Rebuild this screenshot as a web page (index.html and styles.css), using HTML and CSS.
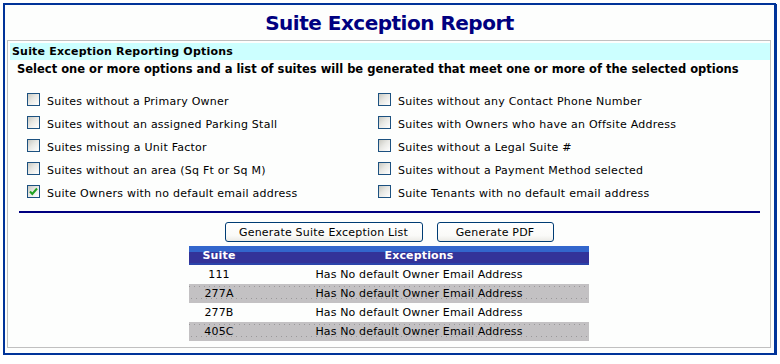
FILE: index.html
```html
<!DOCTYPE html>
<html lang="en">
<head>
<meta charset="UTF-8">
<meta name="viewport" content="width=device-width, initial-scale=1.0">
<title>Suite Exception Report</title>
<link rel="stylesheet" href="styles.css">
</head>
<body>
<div class="report">
  <h1 class="title">Suite Exception Report</h1>
  <div class="panel">
    <div class="panel-head">Suite Exception Reporting Options</div>
    <p class="intro">Select one or more options and a list of suites will be generated that meet one or more of the selected options</p>

    <div class="options">
      <label class="option"><span class="box"></span>Suites without a Primary Owner</label>
      <label class="option"><span class="box"></span>Suites without any Contact Phone Number</label>
      <label class="option"><span class="box"></span>Suites without an assigned Parking Stall</label>
      <label class="option"><span class="box"></span>Suites with Owners who have an Offsite Address</label>
      <label class="option"><span class="box"></span>Suites missing a Unit Factor</label>
      <label class="option"><span class="box"></span>Suites without a Legal Suite #</label>
      <label class="option"><span class="box"></span>Suites without an area (Sq Ft or Sq M)</label>
      <label class="option"><span class="box"></span>Suites without a Payment Method selected</label>
      <label class="option"><span class="box checked"><svg width="9" height="9" viewBox="0 0 9 9"><path d="M1 4.5 L3.3 7 L8 1.5" fill="none" stroke="#21a121" stroke-width="2"/></svg></span>Suite Owners with no default email address</label>
      <label class="option"><span class="box"></span>Suite Tenants with no default email address</label>
    </div>

    <div class="divider"></div>

    <div class="actions">
      <button class="button wide">Generate Suite Exception List</button>
      <button class="button">Generate PDF</button>
    </div>

    <table class="results">
      <tr><th class="suite">Suite</th><th>Exceptions</th></tr>
      <tr><td>111</td><td>Has No default Owner Email Address</td></tr>
      <tr class="alt"><td>277A</td><td>Has No default Owner Email Address</td></tr>
      <tr><td>277B</td><td>Has No default Owner Email Address</td></tr>
      <tr class="alt"><td>405C</td><td>Has No default Owner Email Address</td></tr>
    </table>
  </div>
</div>
</body>
</html>
```

FILE: styles.css
```css
  body {
    margin: 3px;
    font-family: "DejaVu Sans", Verdana, sans-serif;
    font-size: 11px;
    color: #000;
    background-color: #fff;
  }
  .report {
    width: 773px;
    height: 352px;
    box-sizing: border-box;
    border: 2px solid #003399;
    box-shadow: 1px 1px 0 #003399;
    background-color: #fdfefd;
  }
  .title {
    margin: 0;
    padding: 5px 0 4px;
    line-height: 26px;
    font-size: 20px;
    letter-spacing: -0.5px;
    font-weight: bold;
    text-align: center;
    color: #000080;
  }
  .panel {
    margin: 0 3px 0 2px;
    height: 308px;
    box-sizing: border-box;
    border: 1px solid #c0c0c0;
    padding-top: 2px;
  }
  .panel-head {
    margin-left: 2px;
    padding-left: 2px;
    height: 17px;
    line-height: 17px;
    font-weight: bold;
    letter-spacing: 0.2px;
    background-color: #ccffff;
  }
  .intro {
    margin: 1px 0 0;
    padding-left: 9px;
    line-height: 16px;
    font-size: 11.5px;
    font-weight: bold;
  }
  .options {
    display: grid;
    grid-template-columns: 351px 351px;
    margin: 13px 0 0 19px;
    letter-spacing: 0.25px;
  }
  .option {
    display: flex;
    align-items: center;
    height: 23px;
  }
  .box {
    display: flex;
    align-items: center;
    justify-content: center;
    width: 13px;
    height: 13px;
    box-sizing: border-box;
    margin: 0 7px 4px 0;
    border: 1px solid #1c5180;
    background: linear-gradient(135deg, #c8c8c0 0%, #e8e8e4 45%, #fff 100%);
  }
  .divider {
    margin: 6px 10px 0 11px;
    border-top: 2px solid #000080;
  }
  .actions {
    display: flex;
    justify-content: center;
    gap: 14px;
    margin-top: 9px;
  }
  .button {
    width: 117px;
    height: 20px;
    padding: 0;
    font-family: inherit;
    font-size: 11px;
    letter-spacing: 0.2px;
    color: #000;
    border: 1px solid #003c74;
    border-radius: 3px;
    background: linear-gradient(#fff, #fafaf8 70%, #ecebe6);
  }
  .button.wide {
    width: 198px;
  }
  .results {
    width: 400px;
    margin: 4px auto 0;
    border-collapse: collapse;
    letter-spacing: 0.15px;
  }
  .results th {
    height: 19px;
    padding: 0;
    color: #fff;
    font-weight: bold;
    background: linear-gradient(#3366cc 0, #3366cc 6px, #333399 6px, #333399 17px, #2b44aa 17px);
  }
  .results th.suite {
    width: 60px;
  }
  .results td {
    height: 19px;
    padding: 0;
    text-align: center;
  }
  .results tr.alt td {
    background-color: #c3c1c3;
    background-image:
      linear-gradient(90deg, #9a989a 1px, transparent 1px),
      linear-gradient(90deg, #9a989a 1px, transparent 1px);
    background-size: 5px 1px, 5px 1px;
    background-position: 0 2px, 2px 14px;
    background-repeat: repeat-x;
  }
```
